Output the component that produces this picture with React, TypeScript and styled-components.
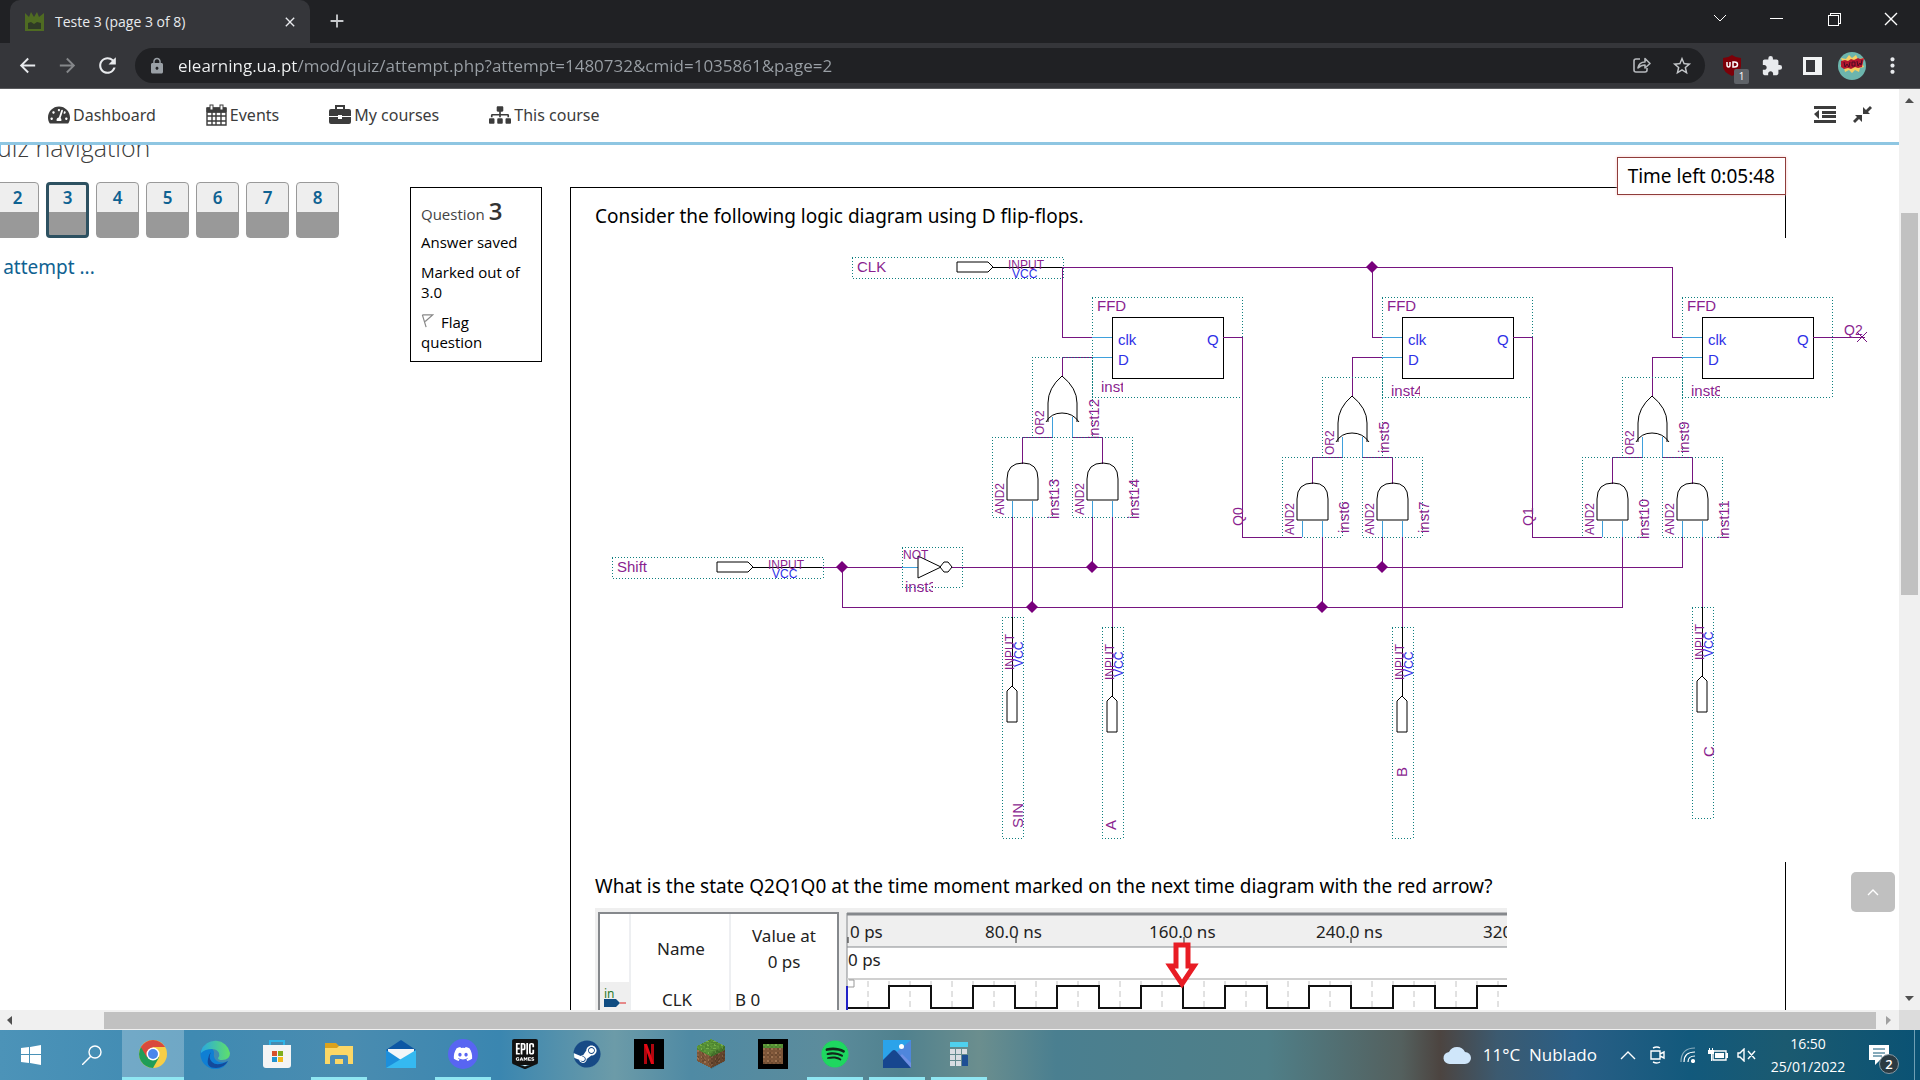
import React from "react";
import styled, { createGlobalStyle, css } from "styled-components";
import { FaSitemap, FaDiscord, FaSpotify, FaSteam, FaTachometerAlt } from "react-icons/fa";
import { MdArrowBack, MdArrowForward, MdRefresh, MdLock, MdStarBorder, MdExtension, MdMoreVert, MdAdd, MdClose } from "react-icons/md";
import { SiEpicgames } from "react-icons/si";

const sans = `"Open Sans", "Noto Sans", sans-serif`;
const pageFont = `"Noto Sans", "Open Sans", sans-serif`;
const schematicFont = `"Liberation Sans", Arial, sans-serif`;

const GlobalStyle = createGlobalStyle`
  * { box-sizing: border-box; }
  html, body { margin: 0; height: 100%; }
  body { font-family: ${sans}; color: #000; background: #fff; overflow: hidden; }
  button { font: inherit; color: inherit; background: none; border: 0; padding: 0; }
  a { text-decoration: none; }
  p { margin: 0; }
  svg { display: block; flex: none; }
`;

const Screen = styled.div`
  display: flex;
  flex-direction: column;
  height: 100vh;
`;

/* ---------- browser chrome ---------- */

const TabStrip = styled.div`
  display: flex;
  height: 43px;
  padding-left: 10px;
  background: #202124;
  color: #e8eaed;
`;

const Tab = styled.div`
  display: flex;
  align-items: center;
  width: 300px;
  padding: 0 11px 0 14px;
  border-radius: 10px 10px 0 0;
  background: #35363a;
`;

const TabTitle = styled.span`
  flex: 1;
  padding-left: 10px;
  font-size: 14px;
  line-height: 20px;
`;

const TabButton = styled.button`
  display: grid;
  place-items: center;
  width: 18px;
  height: 42px;
`;

const NewTab = styled(TabButton)`
  width: 54px;
  color: #c8cacd;
`;

const WindowControls = styled.div`
  display: flex;
  margin-left: auto;
  padding-right: 1px;
  height: 37px;
`;

const WindowButton = styled.button`
  display: grid;
  place-items: center;
  width: 57px;
`;

const Toolbar = styled.div`
  display: flex;
  align-items: center;
  height: 46px;
  padding: 0 8px 0 7px;
  border-bottom: 1px solid #5a5b5e;
  background: #35363a;
  color: #e8eaed;
`;

const ToolButton = styled.button<{ $dim?: boolean }>`
  position: relative;
  display: grid;
  place-items: center;
  width: 40px;
  height: 36px;
  color: ${(p) => (p.$dim ? "#85878a" : "#e8eaed")};
`;

const Omnibox = styled.div`
  display: flex;
  align-items: center;
  flex: 1;
  height: 35px;
  margin: 0 7px 0 8px;
  padding: 0 3px 0 13px;
  border-radius: 18px;
  background: #202124;
  color: #9aa0a6;
`;

const Address = styled.input`
  flex: 1;
  min-width: 0;
  margin-left: 12px;
  padding: 0;
  border: 0;
  outline: 0;
  font-family: ${sans};
  font-size: 17px;
  line-height: 24px;
  color: transparent;
  background: linear-gradient(to right, #f1f3f4 119px, #9aa0a6 119px);
  background-clip: text;
  -webkit-background-clip: text;
`;

const CountBadge = styled.span`
  position: absolute;
  right: 3px;
  bottom: 0;
  width: 15px;
  height: 15px;
  border-radius: 2px;
  background: #5f6368;
  color: #fff;
  font-size: 10px;
  line-height: 15px;
`;

/* ---------- page viewport ---------- */

const Viewport = styled.div`
  display: grid;
  grid-template-columns: 1fr 21px;
  grid-template-rows: 1fr 20px;
  flex: 1;
  min-height: 0;
`;

const Page = styled.div`
  position: relative;
  display: flex;
  flex-direction: column;
  min-width: 0;
  min-height: 0;
  overflow: hidden;
  font-family: ${pageFont};
`;

const SiteHeader = styled.header`
  display: flex;
  align-items: center;
  flex: none;
  height: 56px;
  padding: 0 27px 2px 48px;
  border-bottom: 3px solid #8ec6e2;
  color: #3c3c3c;
`;

const SiteNav = styled.nav`
  display: flex;
  gap: 50px;
`;

const SiteLink = styled.a`
  display: flex;
  align-items: center;
  gap: 3px;
  font-size: 16px;
  line-height: 24px;
  color: #3c3c3c;
`;

const HeaderTools = styled.div`
  display: flex;
  gap: 16px;
  margin-left: auto;
`;

const Scroller = styled.main`
  display: flex;
  align-items: flex-start;
  flex: 1;
  min-height: 0;
  overflow: hidden;
  padding-right: 113px;
`;

const SideColumn = styled.aside`
  flex: none;
  width: 464px;
  margin: -14px 0 0 -54px;
`;

const SideHeading = styled.h2`
  margin: 0 0 19px;
  padding-left: 32px;
  font-family: ${sans};
  font-size: 25px;
  line-height: 32px;
  font-weight: 300;
  color: #3c3c3c;
`;

const QuestionButtons = styled.div`
  display: flex;
  gap: 7px;
  margin-bottom: 17px;
`;

const QuestionButton = styled.a<{ $current?: boolean }>`
  width: 43px;
  height: 56px;
  border-radius: 4px;
  border: 1px solid #999;
  background: linear-gradient(#eee 30px, #999 30px);
  background-origin: border-box;
  font-size: 17px;
  line-height: 30px;
  font-weight: 600;
  text-align: center;
  color: #0f6292;
  ${(p) =>
    p.$current &&
    css`
      border: 3px solid #2d5161;
      line-height: 26px;
    `}
`;

const FinishLink = styled.a`
  font-size: 19px;
  line-height: 24px;
  color: #0f6292;
`;

const InfoCard = styled.section`
  flex: none;
  display: flex;
  flex-direction: column;
  gap: 10px;
  width: 132px;
  margin: 42px 28px 0 0;
  padding: 12px 10px 9px;
  border: 1px solid #000;
  font-family: ${sans};
  font-size: 15px;
  line-height: 20px;
`;

const InfoTitle = styled.h3`
  display: flex;
  align-items: baseline;
  gap: 4px;
  margin: 0;
  height: 22px;
  font-size: 15px;
  line-height: 22px;
  font-weight: 400;
  color: #444;
`;

const InfoNumber = styled.span`
  font-size: 24px;
  font-weight: 600;
  color: #333;
`;

const FlagLabel = styled.button`
  text-align: left;
  line-height: 20px;
  svg { display: inline-block; margin-right: 7px; }
`;

const QuestionCard = styled.section`
  position: relative;
  flex: 1;
  min-width: 0;
  margin-top: 42px;
  padding: 14px 24px 40px;
  border: 1px solid #000;
`;

const QuestionText = styled.p`
  font-size: 19px;
  line-height: 28px;
  white-space: nowrap;
`;

const Timer = styled.div`
  position: absolute;
  top: -31px;
  right: -1px;
  padding: 4px 10px;
  border: 1px solid #8f3c3a;
  background: #fff;
  box-shadow: 0 0 3px #f6c9c7;
  font-size: 19px;
  line-height: 28px;
  white-space: nowrap;
`;

const Schematic = styled.svg`
  position: relative;
  margin: 8px 0 10px;
  background: #fff;
  font-family: ${schematicFont};
`;

const WaveFigure = styled.svg`
  margin-top: 8px;
  font-family: ${pageFont};
  font-size: 17px;
`;

const BackToTop = styled.button`
  position: absolute;
  right: 4px;
  bottom: 98px;
  display: grid;
  place-items: center;
  width: 44px;
  height: 40px;
  border-radius: 5px;
  background: #c0c0c0;
  color: #fff;
`;

const VScroll = styled.div`
  display: flex;
  flex-direction: column;
  align-items: center;
  padding: 7px 0;
  background: #f0f0f0;
  color: #505050;
`;

const VThumb = styled.div`
  width: 17px;
  height: 382px;
  margin: 108px 0 auto;
  background: #c1c1c1;
`;

const HScroll = styled.div`
  display: flex;
  align-items: center;
  padding: 0 6px;
  background: #f0f0f0;
  color: #505050;
`;

const HThumb = styled.div`
  flex: 1;
  height: 17px;
  margin: 0 8px 0 89px;
  background: #c1c1c1;
`;

const Corner = styled.div`
  background: #dcdcdc;
`;

/* ---------- taskbar ---------- */

const Taskbar = styled.footer`
  display: flex;
  height: 50px;
  background: linear-gradient(
    to right,
    #4c93b8 0%, #3f8ab2 10%, #4a8cb0 18%, #3a86b0 26%, #6c9ba8 32%, #4f8aa4 36%,
    #5c8c9c 43%, #50818e 47%, #6b8e8e 51%, #4a7f90 55%, #4f7f88 66%, #54605e 73%,
    #4c4440 75%, #3c5a70 78%, #2a5f86 82%, #12597c 88%, #1b5a70 93%, #0a5274 100%
  );
  color: #fff;
`;

const TaskButton = styled.button<{ $width?: number; $active?: boolean }>`
  display: grid;
  place-items: center;
  width: ${(p) => p.$width || 62}px;
  ${(p) => p.$active && css`background: rgba(255, 255, 255, 0.25);`}
`;

const AppButton = styled(TaskButton)<{ $open?: boolean }>`
  border-bottom: 3px solid transparent;
  border-image: ${(p) =>
      p.$active
        ? "linear-gradient(#8fe6f2, #8fe6f2)"
        : p.$open
          ? "linear-gradient(to right, transparent 6px, #8fe6f2 6px, #8fe6f2 56px, transparent 56px)"
          : "none"}
    3;
`;

const Tray = styled.div`
  display: flex;
  margin-left: auto;
`;

const Weather = styled.button`
  display: flex;
  align-items: center;
  gap: 12px;
  margin-right: 16px;
  font-size: 17px;
  line-height: 24px;
  white-space: pre;
`;

const Clock = styled.button`
  width: 94px;
  font-size: 14px;
  line-height: 23px;
  text-align: center;
`;

const Notifications = styled(TaskButton)`
  position: relative;
`;

const NoticeCount = styled.span`
  position: absolute;
  left: 24px;
  bottom: 6px;
  width: 20px;
  height: 20px;
  border: 1px solid #8899a3;
  border-radius: 50%;
  background: #2b3a42;
  font-size: 13px;
  line-height: 18px;
  font-weight: 600;
`;

const ShowDesktop = styled.button`
  width: 6px;
  margin-left: 11px;
  border-left: 1px solid #6f9fb4;
`;

/* ---------- schematic parts ---------- */

const WIRE = "#761480";
const PIN = "#3fa0dc";
const LABEL = "#8a1f8f";
const BLUE = "#2f2fe6";

const Wire = ({ d, c = WIRE }: { d: string; c?: string }) => (
  <path d={d} fill="none" stroke={c} shapeRendering="crispEdges" />
);

const Dots = ({ x, y, w, h }: { x: number; y: number; w: number; h: number }) => (
  <rect x={x} y={y} width={w} height={h} fill="none" stroke="#0f7f7f" strokeDasharray="1 2" shapeRendering="crispEdges" />
);

const Label = ({ x, y, s = 15, c = LABEL, children }: { x: number; y: number; s?: number; c?: string; children: React.ReactNode }) => (
  <text x={x} y={y} fontSize={s} fill={c}>{children}</text>
);

const VLabel = ({ x, y, s = 15, c = LABEL, children }: { x: number; y: number; s?: number; c?: string; children: React.ReactNode }) => (
  <text transform={`translate(${x} ${y}) rotate(-90)`} fontSize={s} fill={c}>{children}</text>
);

const Node = ({ x, y }: { x: number; y: number }) => (
  <path d={`M${x - 6} ${y}l4 -4l2 -2l2 2l4 4l-4 4l-2 2l-2 -2z`} fill="#78007c" />
);

const HInput = ({ x, y, name }: { x: number; y: number; name: string }) => (
  <g>
    <Dots x={x} y={y - 10} w={211} h={21} />
    <Label x={x + 5} y={y + 5}>{name}</Label>
    <path d={`M${x + 105} ${y - 5}h31l5 5l-5 5h-31z`} fill="none" stroke="#000" />
    <Wire d={`M${x + 141} ${y}h69`} c="#000" />
    <Label x={x + 156} y={y + 2} s={12}>INPUT</Label>
    <Label x={x + 160} y={y + 11} s={12} c={BLUE}>VCC</Label>
  </g>
);

type VInputProps = { x: number; y: number; h?: number; name: string; nx: number; ny: number };
const VInput = ({ x, y, h = 211, name, nx, ny }: VInputProps) => (
  <g>
    <Dots x={x - 10} y={y} w={21} h={h} />
    <Wire d={`M${x} ${y}v69`} c="#000" />
    <path d={`M${x - 5} ${y + 105}v-31l5 -5l5 5v31z`} fill="none" stroke="#000" />
    <VLabel x={x + 2} y={y + 53} s={12}>INPUT</VLabel>
    <VLabel x={x + 11} y={y + 50} s={12} c={BLUE}>VCC</VLabel>
    <VLabel x={nx} y={ny}>{name}</VLabel>
  </g>
);

const AndGate = ({ x, y, name, ny }: { x: number; y: number; name: string; ny: number }) => (
  <g>
    <Dots x={x} y={y} w={60} h={80} />
    <path d={`M${x + 15} ${y + 63}v-21q0 -16 16 -16q15 0 15 16v21z`} fill="none" stroke="#000" />
    <Wire d={`M${x + 20} ${y + 64}v16M${x + 40} ${y + 64}v16`} c={PIN} />
    <VLabel x={x + 12} y={y + 78} s={12}>AND2</VLabel>
    <VLabel x={x + 67} y={ny}>{name}</VLabel>
  </g>
);

/* One shift stage: flip-flop, its OR gate and the two AND gates feeding it. */
type StageProps = { x: number; drop: number; clk: number; ff: string; or: string; left: string; right: string };
const Stage = ({ x, drop, clk, ff, or, left, right }: StageProps) => {
  const oy = 357 + drop;
  const long = left.length > 5 ? 82 : 76;
  return (
    <g>
      <Dots x={x + 30} y={297} w={150} h={100} />
      <rect x={x + 50} y={317} width={111} height={61} fill="none" stroke="#000" shapeRendering="crispEdges" />
      <Label x={x + 35} y={311}>FFD</Label>
      <Label x={x + 56} y={345} c={BLUE}>clk</Label>
      <Label x={x + 56} y={365} c={BLUE}>D</Label>
      <Label x={x + 145} y={345} c={BLUE}>Q</Label>
      <svg x={x + 39} y={drop ? 380 : 376} width={ff.length > 4 ? 29 : 22} height={20}>
        <text x="0" y="16" fontSize="15" fill={LABEL}>{ff}</text>
      </svg>
      <Wire d={`M${x + 30} 337h20M${x + 30} 357h20`} c={PIN} />
      <Wire d={`M${clk} 337H${x + 30}M${x} ${oy + 20}V357h30M${x + 161} 337h19`} />
      <Dots x={x - 30} y={oy} w={60} h={80} />
      <path
        d={`M${x} ${oy + 19}q-14 12 -14 27v19M${x} ${oy + 19}q15 12 15 27v19M${x - 16} ${oy + 65}q5 -9 16 -9q11 0 17 9`}
        fill="none"
        stroke="#000"
      />
      <Wire d={`M${x - 10} ${oy + 60}v20M${x + 10} ${oy + 60}v20`} c={PIN} />
      <Wire d={`M${x - 10} ${oy + 80}h-30v27M${x + 10} ${oy + 80}h30v27`} />
      <VLabel x={x - 18} y={oy + 78} s={12}>OR2</VLabel>
      <svg x={x + 24} y={oy + 30} width={18} height={or.length > 5 ? 50 : 60}>
        <text transform={`translate(13 ${or.length > 5 ? 52 : 46}) rotate(-90)`} fontSize="15" fill={LABEL}>{or}</text>
      </svg>
      <AndGate x={x - 70} y={oy + 80} name={left} ny={oy + 80 + long} />
      <AndGate x={x + 10} y={oy + 80} name={right} ny={oy + 80 + long} />
    </g>
  );
};

const LogicDiagram = () => (
  <Schematic width="1290" height="624" viewBox="595 238 1290 624" role="img" aria-label="Logic diagram">
    <Wire d="M1062 267H1672V337M1062 267V337M1372 267V337" />
    <HInput x={852} y={267} name="CLK" />
    <HInput x={612} y={567} name="Shift" />
    <Stage x={1062} drop={0} clk={1062} ff="inst" or="inst12" left="inst13" right="inst14" />
    <Stage x={1352} drop={20} clk={1372} ff="inst4" or="inst5" left="inst6" right="inst7" />
    <Stage x={1652} drop={20} clk={1672} ff="inst8" or="inst9" left="inst10" right="inst11" />
    <Wire d="M1242 337V537H1302M1532 337V537H1602M1832 337h33" />
    <VLabel x={1243} y={526} s={14}>Q0</VLabel>
    <VLabel x={1533} y={526} s={14}>Q1</VLabel>
    <Label x={1844} y={335} s={14}>Q2</Label>
    <path d="M1857 332l10 10M1867 332l-10 10" stroke={WIRE} />
    <Wire d="M822 567H902M842 567V607H1622V537M951 567H1682V537" />
    <Wire d="M1012 517V617M1032 517V607M1092 517V567M1112 517V627" />
    <Wire d="M1322 537V607M1382 537V567M1402 537V627M1702 537V607" />
    <Dots x={902} y={547} w={60} h={40} />
    <Wire d="M902 567h16" c={PIN} />
    <path d="M918 556V578L941 567zM940 567l4 -5h4l4 5l-4 5h-4z" fill="#fff" stroke="#000" />
    <Label x={903} y={559} s={12}>NOT</Label>
    <svg x="905" y="576" width="28" height="20">
      <text x="0" y="16" fontSize="15" fill={LABEL}>inst3</text>
    </svg>
    <VInput x={1012} y={617} h={221} name="SIN" nx={1023} ny={828} />
    <VInput x={1112} y={627} name="A" nx={1116} ny={830} />
    <VInput x={1402} y={627} name="B" nx={1407} ny={777} />
    <VInput x={1702} y={607} name="C" nx={1714} ny={757} />
    <Node x={1372} y={267} />
    <Node x={842} y={567} />
    <Node x={1092} y={567} />
    <Node x={1382} y={567} />
    <Node x={1032} y={607} />
    <Node x={1322} y={607} />
  </Schematic>
);

const clockPath = () => {
  let d = "M253 100";
  for (let i = 0; i < 16; i++) {
    d += i % 2 === 0 ? "H" + (294 + i * 42) + "V78" : "H" + (294 + i * 42) + "V100";
  }
  return d;
};

const TimeDiagram = () => {
  const marks = [["0 ps", 255, 253], ["80.0 ns", 390, 421], ["160.0 ns", 554, 589], ["240.0 ns", 721, 756], ["320.0 ns", 888, 924]] as const;
  return (
    <WaveFigure width="912" height="140" viewBox="0 0 912 140" role="img" aria-label="Time diagram">
      <rect width="912" height="140" fill="#efefef" />
      <rect x="4" y="5" width="239" height="150" fill="#fff" stroke="#85888c" strokeWidth="2" />
      <path d="M35 6v134M135 6v134" stroke="#dcdfe4" />
      <rect x="5" y="74" width="30" height="66" fill="#efefef" />
      <rect x="252" y="39" width="660" height="101" fill="#fff" />
      <path d="M252 6h660" stroke="#85888c" strokeWidth="3" />
      <path d="M252 5v135M252 39h660" stroke="#85888c" fill="none" />
      <path d="M252 71h660" stroke="#d0d0d0" strokeWidth="2" />
      <g fill="#222">
        <text x="86" y="47" textAnchor="middle">Name</text>
        <text x="189" y="34" textAnchor="middle">Value at</text>
        <text x="189" y="60" textAnchor="middle">0 ps</text>
        <text x="82" y="98" textAnchor="middle">CLK</text>
        <text x="140" y="98">B 0</text>
        {marks.map(([t, x]) => <text key={t} x={x} y="30">{t}</text>)}
        <text x="253" y="58">0 ps</text>
      </g>
      {marks.map(([t, , x]) => <path key={t} d={`M${x} 29v6`} stroke="#222" strokeWidth="1" />)}
      <path d={Array.from({ length: 32 }, (_, i) => `M${273 + i * 21} 73V140`).join("")} stroke="#c4c4c4" strokeDasharray="6 4" />
      <path d="M254 72h5v7h-6" stroke="#999" fill="none" />
      <path d={clockPath()} fill="none" stroke="#111" strokeWidth="2" shapeRendering="crispEdges" />
      <path d="M252 78V140" stroke="#2222c8" strokeWidth="2" />
      <path d="M581 37h12v21h6l-12 18l-12 -18h6z" fill="#fff" stroke="#e81c24" strokeWidth="5" />
      <text x="9" y="90" fontSize="12" fill="#2a7a2a">in</text>
      <path d="M9 91h12l4 4l-4 4h-12z" fill="#0f4c81" />
      <path d="M25 95h6" stroke="#d22" />
    </WaveFigure>
  );
};

/* ---------- small icons ---------- */

const Arrow = ({ d, color = "currentColor" }: { d: string; color?: string }) => (
  <svg width="9" height="9" viewBox="0 0 9 9"><path d={d} fill={color} /></svg>
);

const Crown = () => (
  <svg width="21" height="20" viewBox="0 0 21 20">
    <path d="M1 1l4 4 2-5 3 5 3-5 2 5 5-4v18H1z" fill="#4f6b22" />
    <path d="M4 11l3-1 3 2 3-2 4 1v6H4z" fill="#2f3a26" />
  </svg>
);

const CalendarIcon = () => (
  <svg width="21" height="22" viewBox="0 0 21 22" stroke="#3c3c3c" fill="none">
    <path d="M1 4h19v17H1z M1 8h19M1 12h19M1 17h19M6 8v13M10 8v13M15 8v13" strokeWidth="1.4" />
    <path d="M1 4h19v4H1z" fill="#3c3c3c" />
    <rect x="4" y="1" width="3" height="5" fill="#fff" />
    <rect x="14" y="1" width="3" height="5" fill="#fff" />
  </svg>
);

const BriefcaseIcon = () => (
  <svg width="22" height="20" viewBox="0 0 22 20">
    <path d="M7 4V1h8v3" fill="none" stroke="#3c3c3c" strokeWidth="2" />
    <path d="M2 4h18q2 0 2 2v5H13v-1H9v1H0V6q0-2 2-2z" fill="#3c3c3c" />
    <path d="M0 12h9v2h4v-2h9v5q0 2-2 2H2q-2 0-2-2z" fill="#3c3c3c" />
  </svg>
);

const OutdentIcon = () => (
  <svg width="23" height="18" viewBox="0 0 23 18" fill="#3c3c3c">
    <path d="M0 0h22v3H0zM8 5h14v3H8zM8 9h14v3H8zM0 14h22v3H0zM5 4v9L0 8z" />
  </svg>
);

const CompressIcon = () => (
  <svg width="19" height="18" viewBox="0 0 19 18" fill="#3c3c3c">
    <path d="M10 1v7h7l-2-2 4-4-2-2-4 4zM9 9H2l2 2-4 4 2 2 4-4 3 3z" />
  </svg>
);

const ShareIcon = () => (
  <svg width="18" height="17" viewBox="0 0 18 17" fill="none" stroke="#b6b9bd" strokeWidth="1.6">
    <path d="M7 2H3q-2 0-2 2v9q0 2 2 2h9q2 0 2-2v-2" />
    <path d="M5 11q1-6 7-6V1.500l5 5-5 4.500V8q-4 0-7 3z" strokeLinejoin="round" />
  </svg>
);

const ShieldIcon = () => (
  <svg width="20" height="22" viewBox="0 0 20 22">
    <path d="M10 0q4 3 9 3v8q0 6-9 10q-9-4-9-10V3q5 0 9-3z" fill="#7d0008" />
    <path d="M5 7v3q0 2 1.500 2t1.500-2V7M11 7v5h1.500q3 0 3-2.500T12.500 7z" fill="none" stroke="#fff" strokeWidth="1.500" />
  </svg>
);

const AvatarIcon = () => (
  <svg width="28" height="28" viewBox="0 0 28 28">
    <circle cx="14" cy="14" r="14" fill="#6cb5ad" />
    <path d="M3 6l5 1 3-4 3 3 4-3 2 4 6-1-2 5 2 4-4 1-1 4-4-2-3 3-3-3-4 2-1-4-4-2 3-3z" fill="#f5cf62" />
    <path d="M3 9l4-1 3 1 3-2 3 1 4-2 2 1 4-1-2 9-4 1-3-1-4 2-3-1-4 1-3-2z" fill="#b3162e" />
    <path d="M6 10l1 5 2-3 2 3 1-5M14 10v4h3v-4zM19 9l1 5 2-3 1 2 1-5" stroke="#4a0a24" fill="none" />
  </svg>
);

const ChromeIcon = () => (
  <svg width="28" height="28" viewBox="0 0 28 28">
    <circle cx="14" cy="14" r="14" fill="#f7ce46" />
    <path d="M1.900 7A14 14 0 0 0 14 28l6-10.500L14 14z" fill="#1f9d58" />
    <path d="M1.900 7A14 14 0 0 1 26.100 7H14l-6 10.500z" fill="#d9493c" />
    <circle cx="14" cy="14" r="6.500" fill="#fff" />
    <circle cx="14" cy="14" r="5" fill="#4a86ec" />
  </svg>
);

const EdgeIcon = () => (
  <svg width="30" height="30" viewBox="0 0 30 30">
    <defs>
      <linearGradient id="edgeTop" x1="0" x2="1"><stop offset="0" stopColor="#2aa8e0" /><stop offset="1" stopColor="#5fe06a" /></linearGradient>
    </defs>
    <path d="M1 11A15 15 0 0 0 17 30q8-1 11-8-6 3-11 0-4-3-3-8 0-4-4-5z" fill="#0f7fd4" />
    <path d="M1 12A15 15 0 0 1 30 14q0 7-8 7-4 0-4-2 2-2 1-5-2-4-7-4-7 0-11 4z" fill="url(#edgeTop)" />
    <path d="M11 13q-3 6 1 10 5 5 16-1-4 7-12 7Q6 29 8 20q1-5 3-7z" fill="#134a9c" />
  </svg>
);

const StoreIcon = () => (
  <svg width="30" height="30" viewBox="0 0 30 30">
    <path d="M8 7V2h14v5" fill="none" stroke="#2fb4e8" strokeWidth="2" />
    <path d="M1 6h28v20q0 3-3 3H4q-3 0-3-3z" fill="#f4f4f4" />
    <path d="M10 12h5v5h-5z" fill="#d8502c" /><path d="M16 12h5v5h-5z" fill="#7fae1e" />
    <path d="M10 18h5v5h-5z" fill="#2293d0" /><path d="M16 18h5v5h-5z" fill="#f2b91d" />
  </svg>
);

const FolderIcon = () => (
  <svg width="28" height="24" viewBox="0 0 28 24">
    <path d="M0 1h11l3 3h14v6H0z" fill="#dba21c" />
    <path d="M0 6h12l2-2h14v18H0z" fill="#fbd766" />
    <path d="M5 24V15q0-2 2-2h14q2 0 2 2v9h-5v-7h-8v7z" fill="#4a8db8" />
    <path d="M10 18h8v4h-8z" fill="#fbd766" />
  </svg>
);

const MailIcon = () => (
  <svg width="30" height="28" viewBox="0 0 30 28">
    <path d="M0 10L15 0l15 10v3H0z" fill="#0c57a4" />
    <path d="M2 9h26v6L15 22 2 14z" fill="#f4f6f8" />
    <path d="M0 10l15 10L0 28z" fill="#1c8fdc" />
    <path d="M30 10v18H0z" fill="#35b9f1" />
  </svg>
);

const NetflixIcon = () => (
  <svg width="30" height="30" viewBox="0 0 30 30">
    <path d="M0 0h30v30H0z" fill="#000" />
    <path d="M10 5h3v20h-3zM17 5h3v20h-3z" fill="#b0060f" />
    <path d="M10 5h3l7 20h-3z" fill="#e50914" />
  </svg>
);

const dirt = ["#8a5f40", "#6d4a30", "#9b7150", "#7c5538"];
const grass = ["#5f9a3a", "#4d8430", "#74ad48", "#568f36"];

const Pixels = ({ cols, rows, grassRows }: { cols: number; rows: number; grassRows: number }) => (
  <g shapeRendering="crispEdges">
    {Array.from({ length: cols * rows }, (_, i) => {
      const x = i % cols;
      const y = Math.floor(i / cols);
      const n = (x * 7 + y * 5 + x * y * 3) % 4;
      return <rect key={i} x={x} y={y} width="1" height="1" fill={(y < grassRows + (n % 2) ? grass : dirt)[n]} />;
    })}
  </g>
);

const BlockIcon = () => (
  <svg width="28" height="30" viewBox="0 0 28 30">
    <g transform="matrix(1.75 0.875 0 1.875 0 7)"><Pixels cols={8} rows={8} grassRows={1} /></g>
    <g transform="matrix(1.75 -0.875 0 1.875 14 14)"><Pixels cols={8} rows={8} grassRows={1} /></g>
    <g transform="matrix(1.75 0.875 -1.75 0.875 14 0)"><Pixels cols={8} rows={8} grassRows={8} /></g>
    <path d="M14 14l14-7v15l-14 8z" fill="#000" opacity="0.2" />
  </svg>
);

const GrassIcon = () => (
  <svg width="30" height="30" viewBox="0 0 30 30">
    <path d="M0 0h30v30H0z" fill="#000" />
    <g transform="translate(5 5) scale(2)"><Pixels cols={10} rows={10} grassRows={1} /></g>
  </svg>
);

const PhotosIcon = () => (
  <svg width="28" height="28" viewBox="0 0 28 28">
    <path d="M0 0h28v28H0z" fill="#2ba3ea" />
    <path d="M28 0v28h-8L9 16z" fill="#4f86dc" />
    <path d="M28 28V23l-9-9-5 5 9 9z" fill="#6f8fe4" />
    <path d="M0 20l9-9q2-2 4 0l15 17H0z" fill="#17468f" />
    <circle cx="18.500" cy="6.500" r="2.500" fill="#fff" />
  </svg>
);

const CalcIcon = () => (
  <svg width="18" height="26" viewBox="0 0 18 26">
    <path d="M0 1h18v5H0z" fill="#4fd0ee" />
    <path d="M0 8h5v5H0zM6 8h5v5H6zM12 8h5v5h-5zM0 14h5v5H0zM6 14h5v5H6zM0 20h5v5H0zM6 20h5v5H6z" fill="#d9dde2" />
    <path d="M12 14h6v11h-6z" fill="#1d4f94" />
  </svg>
);

const EpicIcon = () => (
  <svg width="30" height="30" viewBox="0 0 30 30">
    <path d="M5 3h20v20l-10 4-10-4z" fill="#fff" />
    <SiEpicgames size={30} color="#111" />
  </svg>
);

const SteamIcon = () => (
  <svg width="28" height="28" viewBox="0 0 28 28">
    <circle cx="14" cy="14" r="13" fill="#fff" />
    <FaSteam size={28} color="#174a86" />
  </svg>
);

const SpotifyIcon = () => (
  <svg width="28" height="28" viewBox="0 0 28 28">
    <circle cx="14" cy="14" r="13" fill="#12261a" />
    <FaSpotify size={28} color="#1ed760" />
  </svg>
);

const DiscordIcon = () => (
  <svg width="30" height="30" viewBox="0 0 30 30">
    <circle cx="15" cy="15" r="15" fill="#5865f2" />
    <svg x="5" y="5" width="20" height="20"><FaDiscord size={20} color="#fff" /></svg>
  </svg>
);

const stroke = { fill: "none", stroke: "#fff", strokeWidth: 1.4 };

const questions = [1, 2, 3, 4, 5, 6, 7, 8];

const apps: { name: string; icon: React.ReactNode; open?: boolean; active?: boolean }[] = [
  { name: "Chrome", icon: <ChromeIcon />, active: true },
  { name: "Edge", icon: <EdgeIcon /> },
  { name: "Store", icon: <StoreIcon /> },
  { name: "Explorer", icon: <FolderIcon />, open: true },
  { name: "Mail", icon: <MailIcon /> },
  { name: "Discord", icon: <DiscordIcon />, open: true },
  { name: "Epic Games", icon: <EpicIcon /> },
  { name: "Steam", icon: <SteamIcon /> },
  { name: "Netflix", icon: <NetflixIcon /> },
  { name: "Minecraft", icon: <BlockIcon /> },
  { name: "Minecraft Launcher", icon: <GrassIcon /> },
  { name: "Spotify", icon: <SpotifyIcon />, open: true },
  { name: "Photos", icon: <PhotosIcon />, open: true },
  { name: "Calculator", icon: <CalcIcon />, open: true },
];

export default function App() {
  return (
    <Screen>
      <GlobalStyle />
      <TabStrip>
        <Tab>
          <Crown />
          <TabTitle>Teste 3 (page 3 of 8)</TabTitle>
          <TabButton aria-label="Close tab"><MdClose size={16} stroke="currentColor" /></TabButton>
        </Tab>
        <NewTab aria-label="New tab"><MdAdd size={22} /></NewTab>
        <WindowControls>
          <WindowButton aria-label="Search tabs"><svg width="14" height="9" viewBox="0 0 14 9"><path d="M1 1l6 6 6-6" {...stroke} strokeWidth="1" /></svg></WindowButton>
          <WindowButton aria-label="Minimise"><svg width="13" height="1"><path d="M0 0h13v1H0z" fill="#fff" /></svg></WindowButton>
          <WindowButton aria-label="Restore">
            <svg width="14" height="14" viewBox="0 0 14 14" fill="none" stroke="#fff" shapeRendering="crispEdges"><path d="M1 3h10v10H1zM3 3V1h10v10h-2" /></svg>
          </WindowButton>
          <WindowButton aria-label="Close"><svg width="14" height="14" viewBox="0 0 14 14"><path d="M1 1l12 12M13 1L1 13" {...stroke} /></svg></WindowButton>
        </WindowControls>
      </TabStrip>
      <Toolbar>
        <ToolButton aria-label="Back"><MdArrowBack size={23} /></ToolButton>
        <ToolButton aria-label="Forward" $dim><MdArrowForward size={23} /></ToolButton>
        <ToolButton aria-label="Reload"><MdRefresh size={25} /></ToolButton>
        <Omnibox>
          <MdLock size={18} />
          <Address aria-label="Address" readOnly value="elearning.ua.pt/mod/quiz/attempt.php?attempt=1480732&amp;cmid=1035861&amp;page=2" />
          <ToolButton aria-label="Share"><ShareIcon /></ToolButton>
          <ToolButton aria-label="Bookmark"><MdStarBorder size={22} color="#c4c7ca" /></ToolButton>
        </Omnibox>
        <ToolButton aria-label="uBlock Origin"><ShieldIcon /><CountBadge>1</CountBadge></ToolButton>
        <ToolButton aria-label="Extensions"><MdExtension size={22} /></ToolButton>
        <ToolButton aria-label="Side panel">
          <svg width="19" height="18" viewBox="0 0 19 18"><path d="M0 0h19v18H0zM3 3v12h9V3z" fill="#f1f3f4" fillRule="evenodd" /></svg>
        </ToolButton>
        <ToolButton aria-label="Profile"><AvatarIcon /></ToolButton>
        <ToolButton aria-label="Menu"><MdMoreVert size={25} /></ToolButton>
      </Toolbar>

      <Viewport>
        <Page>
          <SiteHeader>
            <SiteNav>
              <SiteLink href="#"><FaTachometerAlt size={22} />Dashboard</SiteLink>
              <SiteLink href="#"><CalendarIcon />Events</SiteLink>
              <SiteLink href="#"><BriefcaseIcon />My courses</SiteLink>
              <SiteLink href="#"><FaSitemap size={22} />This course</SiteLink>
            </SiteNav>
            <HeaderTools>
              <button aria-label="Toggle blocks"><OutdentIcon /></button>
              <button aria-label="Compress page"><CompressIcon /></button>
            </HeaderTools>
          </SiteHeader>
          <Scroller>
            <SideColumn>
              <SideHeading>Quiz navigation</SideHeading>
              <QuestionButtons>
                {questions.map((n) => <QuestionButton key={n} href="#" $current={n === 3}>{n}</QuestionButton>)}
              </QuestionButtons>
              <FinishLink href="#">Finish attempt ...</FinishLink>
            </SideColumn>
            <InfoCard>
              <InfoTitle>Question <InfoNumber>3</InfoNumber></InfoTitle>
              <p>Answer saved</p>
              <p>Marked out of 3.0</p>
              <FlagLabel>
                <svg width="13" height="14" viewBox="0 0 13 15" fill="none" stroke="#888" strokeWidth="1.3"><path d="M1 1l4 13M1 1h11L4 8" /></svg>
                Flag question
              </FlagLabel>
            </InfoCard>
            <QuestionCard>
              <QuestionText>Consider the following logic diagram using D flip-flops.</QuestionText>
              <LogicDiagram />
              <QuestionText>What is the state Q2Q1Q0 at the time moment marked on the next time diagram with the red arrow?</QuestionText>
              <TimeDiagram />
              <Timer>Time left 0:05:48</Timer>
            </QuestionCard>
          </Scroller>
          <BackToTop aria-label="Back to top"><svg width="12" height="8" viewBox="0 0 12 8"><path d="M1 7l5-5 5 5" {...stroke} /></svg></BackToTop>
        </Page>
        <VScroll>
          <Arrow d="M0 7l4-5 5 5z" />
          <VThumb />
          <Arrow d="M0 2l4 5 5-5z" />
        </VScroll>
        <HScroll>
          <Arrow d="M6 0v9L1 4z" />
          <HThumb />
          <Arrow d="M2 0v9l5-5z" color="#a0a0a0" />
        </HScroll>
        <Corner />
      </Viewport>

      <Taskbar>
        <TaskButton $width={61} aria-label="Start">
          <svg width="20" height="20" viewBox="0 0 20 20" fill="#fff"><path d="M0 3l8-1v7H0zM9 2l11-2v9H9zM0 10h8v8l-8-1zM9 10h11v10L9 18z" /></svg>
        </TaskButton>
        <TaskButton $width={61} aria-label="Search">
          <svg width="20" height="20" viewBox="0 0 20 20"><circle cx="13" cy="7" r="6" {...stroke} /><path d="M9 11l-9 9" {...stroke} /></svg>
        </TaskButton>
        {apps.map((a) => (
          <AppButton key={a.name} $active={a.active} $open={a.open} aria-label={a.name}>{a.icon}</AppButton>
        ))}
        <Tray>
          <Weather>
            <svg width="28" height="20" viewBox="0 0 28 20"><path d="M7 19a6 6 0 0 1-1-12 9 9 0 0 1 16 0 6 6 0 0 1 0 12z" fill="#cfe6fa" /></svg>
            11°C  Nublado
          </Weather>
          <TaskButton $width={30} aria-label="Hidden icons"><svg width="16" height="10" viewBox="0 0 16 10"><path d="M1 9l7-7 7 7" {...stroke} /></svg></TaskButton>
          <TaskButton $width={30} aria-label="Meet now">
            <svg width="16" height="18" viewBox="0 0 16 18" {...stroke}><path d="M1 5h9v8H1zM10 8l4-2v6l-4-2M3 2q4-2 7 0M3 16q4 2 7 0" /></svg>
          </TaskButton>
          <TaskButton $width={30} aria-label="Network">
            <svg width="16" height="16" viewBox="0 0 16 16" fill="none" stroke="#fff" strokeWidth="1.2">
              <path d="M1 15Q1 1 15 1" opacity="0.500" /><path d="M4 15Q4 5 15 5M8 15q0-6 7-6" /><circle cx="13" cy="14" r="1.500" fill="#fff" />
            </svg>
          </TaskButton>
          <TaskButton $width={29} aria-label="Battery">
            <svg width="20" height="14" viewBox="0 0 20 14"><path d="M5 3h13v9H5z" {...stroke} /><path d="M7 5h9v5H7zM18 5h2v5h-2zM0 2h6v4H4v7H3V6H0zM1 0h1v2H1zM4 0h1v2H4z" fill="#fff" /></svg>
          </TaskButton>
          <TaskButton $width={29} aria-label="Volume muted">
            <svg width="19" height="14" viewBox="0 0 19 14" {...stroke}><path d="M1 5h2l4-4v12L3 9H1zM11 3l7 8M18 3l-7 8" /></svg>
          </TaskButton>
          <Clock>16:50<br />25/01/2022</Clock>
          <Notifications $width={48} aria-label="Notifications">
            <svg width="20" height="20" viewBox="0 0 20 20"><path d="M0 0h20v15h-9l-5 5v-5H0z" fill="#fff" /><path d="M4 4h12M4 8h12M4 11h9" stroke="#0f5676" /></svg>
            <NoticeCount>2</NoticeCount>
          </Notifications>
          <ShowDesktop aria-label="Show desktop" />
        </Tray>
      </Taskbar>
    </Screen>
  );
}
